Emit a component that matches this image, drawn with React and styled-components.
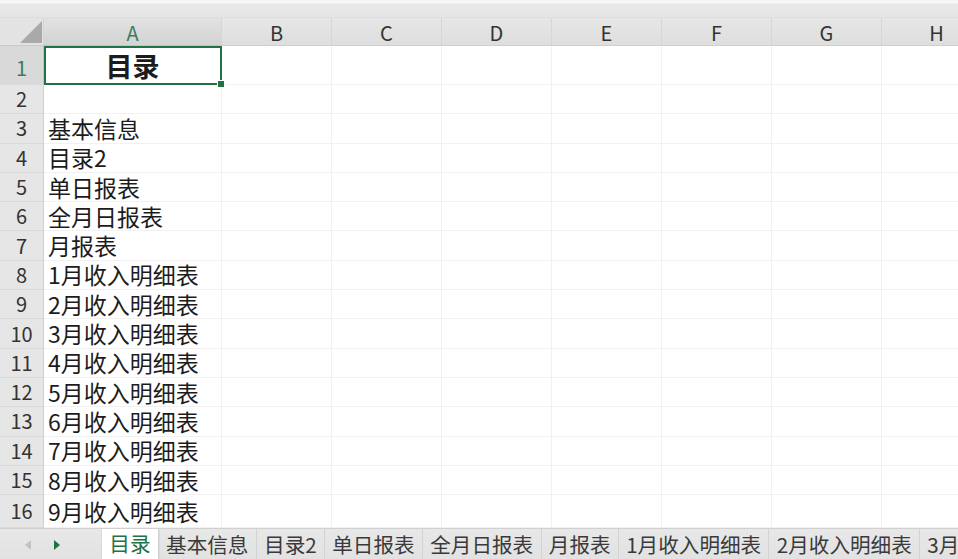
import React from "react";
import styled, { createGlobalStyle } from "styled-components";

const FONT = `"Noto Sans CJK SC", "Noto Sans", sans-serif`;

const GlobalStyle = createGlobalStyle`
  html, body {
    margin: 0;
    padding: 0;
    background: #ffffff;
  }
  body {
    font-family: ${FONT};
  }
`;

const COLUMNS = ["A", "B", "C", "D", "E", "F", "G", "H"];
const ROW_LABELS = [
  "基本信息",
  "目录2",
  "单日报表",
  "全月日报表",
  "月报表",
  "1月收入明细表",
  "2月收入明细表",
  "3月收入明细表",
  "4月收入明细表",
  "5月收入明细表",
  "6月收入明细表",
  "7月收入明细表",
  "8月收入明细表",
  "9月收入明细表",
];
const TABS = [
  "目录",
  "基本信息",
  "目录2",
  "单日报表",
  "全月日报表",
  "月报表",
  "1月收入明细表",
  "2月收入明细表",
  "3月收入明细表",
];

const Window = styled.div`
  width: 958px;
  height: 559px;
  display: flex;
  flex-direction: column;
  overflow: hidden;
  background: #fff;
`;

const TopStrip = styled.div`
  height: 17px;
  flex: none;
  background: linear-gradient(#f7f7f7 0, #f7f7f7 3px, #e9e9e9 4px, #e4e4e4 100%);
  border-bottom: 1px solid #dedede;
`;

const Sheet = styled.div`
  flex: 1;
  display: grid;
  grid-template-columns: 44px 178px repeat(7, 110px);
  grid-template-rows: 28px 39px repeat(14, 29.3px) 1fr;
  overflow: hidden;
  min-height: 0;
`;

const Corner = styled.div`
  position: relative;
  background: #e3e3e3;
  border-right: 1px solid #d4d4d4;
  border-bottom: 1px solid #c9c9c9;
  &::after {
    content: "";
    position: absolute;
    right: 1px;
    bottom: 2px;
    width: 0;
    height: 0;
    border-left: 22px solid transparent;
    border-bottom: 22px solid #a9a9a9;
  }
`;

const ColHead = styled.div`
  display: flex;
  align-items: center;
  justify-content: center;
  padding-top: 3px;
  box-sizing: border-box;
  background: ${(p) =>
    p.$selected
      ? "linear-gradient(#e2e2e2, #d3d3d3)"
      : "linear-gradient(#e6e6e6, #dedede)"};
  border-right: 1px solid #d6d6d6;
  border-bottom: 1px solid ${(p) => (p.$selected ? "#b8c9bf" : "#cfcfcf")};
  color: ${(p) => (p.$selected ? "#3f7a5c" : "#333")};
  font-size: 20px;
  line-height: 1;
  white-space: nowrap;
`;

const RowHead = styled.div`
  display: flex;
  align-items: center;
  justify-content: center;
  background: ${(p) => (p.$selected ? "#d9d9d9" : "#e6e6e6")};
  border-right: 1px solid ${(p) => (p.$selected ? "#b8c9bf" : "#cfcfcf")};
  border-bottom: 1px solid #dadada;
  color: ${(p) => (p.$selected ? "#3f7a5c" : "#333")};
  font-size: 20px;
  line-height: 1;
  padding-top: ${(p) => (p.$tall ? "6px" : "0")};
  box-sizing: border-box;
`;

const Cell = styled.div`
  position: relative;
  display: flex;
  align-items: center;
  justify-content: ${(p) => (p.$center ? "center" : "flex-start")};
  padding-left: ${(p) => (p.$center ? "0" : "4px")};
  border-right: 1px solid #f1f1f1;
  border-bottom: 1px solid #f1f1f1;
  font-size: ${(p) => (p.$title ? "27px" : "23px")};
  font-weight: ${(p) => (p.$title ? 700 : 400)};
  color: #1c1c1c;
  line-height: 1;
  white-space: nowrap;
  box-sizing: border-box;
  min-width: 0;
  z-index: ${(p) => (p.$top ? 3 : "auto")};
`;

const Selection = styled.div`
  position: absolute;
  left: 0;
  top: 0;
  right: -1px;
  bottom: -1px;
  border: 2px solid #217346;
  pointer-events: none;
  &::after {
    content: "";
    position: absolute;
    right: -5px;
    bottom: -5px;
    width: 8px;
    height: 8px;
    background: #217346;
    border: 1px solid #fff;
    box-sizing: border-box;
  }
`;

const TabBar = styled.div`
  height: 31px;
  flex: none;
  display: flex;
  align-items: stretch;
  background: linear-gradient(#e8e8e8, #e2e2e2);
  border-top: 1px solid #d0d0d0;
  box-sizing: border-box;
  overflow: hidden;
`;

const Nav = styled.div`
  width: 102px;
  flex: none;
  display: flex;
  align-items: center;
  gap: 23px;
  padding-left: 25px;
  box-sizing: border-box;
`;

const Arrow = styled.span`
  width: 0;
  height: 0;
  border-top: 5px solid transparent;
  border-bottom: 5px solid transparent;
  ${(p) =>
    p.$dir === "left"
      ? `border-right: 6px solid ${p.$active ? "#217346" : "#c3c3c3"};`
      : `border-left: 6px solid ${p.$active ? "#217346" : "#c3c3c3"};`}
  margin-top: 2px;
`;

const Tab = styled.div`
  flex: none;
  display: flex;
  align-items: center;
  padding: 0 7.3px;
  font-size: 20.6px;
  line-height: 1;
  white-space: nowrap;
  color: ${(p) => (p.$active ? "#217346" : "#3a3a3a")};
  background: ${(p) => (p.$active ? "#ffffff" : "transparent")};
  margin-top: ${(p) => (p.$active ? "-1px" : "0")};
  border-right: 1px solid ${(p) => (p.$active ? "#d0d0d0" : "#d3d3d3")};
  box-shadow: ${(p) => (p.$active ? "0 1px 2px rgba(0,0,0,0.15)" : "none")};
`;

export default function App() {
  return (
    <>
      <GlobalStyle />
      <Window>
        <TopStrip />
        <Sheet>
          <Corner />
          {COLUMNS.map((c) => (
            <ColHead key={c} $selected={c === "A"}>
              {c}
            </ColHead>
          ))}

          <RowHead $selected $tall>
            1
          </RowHead>
          <Cell $center $title $top>
            目录
            <Selection />
          </Cell>
          {COLUMNS.slice(1).map((c) => (
            <Cell key={`1${c}`} />
          ))}

          <RowHead>2</RowHead>
          {COLUMNS.map((c) => (
            <Cell key={`2${c}`} />
          ))}

          {ROW_LABELS.map((label, i) => (
            <React.Fragment key={label}>
              <RowHead>{i + 3}</RowHead>
              <Cell>{label}</Cell>
              {COLUMNS.slice(1).map((c) => (
                <Cell key={`${i + 3}${c}`} />
              ))}
            </React.Fragment>
          ))}
        </Sheet>
        <TabBar>
          <Nav>
            <Arrow $dir="left" />
            <Arrow $dir="right" $active />
          </Nav>
          {TABS.map((t, i) => (
            <Tab key={t} $active={i === 0}>
              {t}
            </Tab>
          ))}
        </TabBar>
      </Window>
    </>
  );
}
